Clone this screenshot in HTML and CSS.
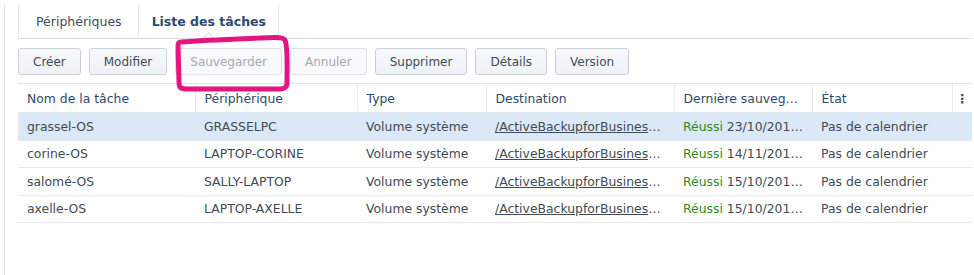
FILE: index.html
```html
<!DOCTYPE html>
<html lang="fr">
<head>
  <meta charset="UTF-8">
  <title>Active Backup for Business - Liste des tâches</title>
  <link rel="stylesheet" href="styles.css">
</head>
<body>
  <div class="panel">
    <nav class="tabs">
      <div class="tab">Périphériques</div>
      <div class="tab active">Liste des tâches</div>
    </nav>

    <div class="toolbar">
      <button class="btn">Créer</button>
      <button class="btn">Modifier</button>
      <button class="btn" disabled>Sauvegarder</button>
      <button class="btn" disabled>Annuler</button>
      <button class="btn">Supprimer</button>
      <button class="btn">Détails</button>
      <button class="btn">Version</button>
    </div>

    <table class="grid">
      <colgroup>
        <col style="width: 177px">
        <col style="width: 162px">
        <col style="width: 129px">
        <col style="width: 188px">
        <col style="width: 138px">
        <col style="width: 140px">
        <col>
      </colgroup>
      <thead>
        <tr>
          <th>Nom de la tâche</th>
          <th>Périphérique</th>
          <th>Type</th>
          <th>Destination</th>
          <th>Dernière sauvegarde</th>
          <th>État</th>
          <th class="menu">&#8942;</th>
        </tr>
      </thead>
      <tbody>
        <tr class="selected">
          <td>grassel-OS</td>
          <td>GRASSELPC</td>
          <td>Volume système</td>
          <td><a href="#">/ActiveBackupforBusiness/grassel-OS</a></td>
          <td><span class="ok">Réussi</span> 23/10/2019 02:10</td>
          <td>Pas de calendrier</td>
          <td></td>
        </tr>
        <tr>
          <td>corine-OS</td>
          <td>LAPTOP-CORINE</td>
          <td>Volume système</td>
          <td><a href="#">/ActiveBackupforBusiness/corine-OS</a></td>
          <td><span class="ok">Réussi</span> 14/11/2019 18:32</td>
          <td>Pas de calendrier</td>
          <td></td>
        </tr>
        <tr>
          <td>salomé-OS</td>
          <td>SALLY-LAPTOP</td>
          <td>Volume système</td>
          <td><a href="#">/ActiveBackupforBusiness/salome-OS</a></td>
          <td><span class="ok">Réussi</span> 15/10/2019 11:04</td>
          <td>Pas de calendrier</td>
          <td></td>
        </tr>
        <tr>
          <td>axelle-OS</td>
          <td>LAPTOP-AXELLE</td>
          <td>Volume système</td>
          <td><a href="#">/ActiveBackupforBusiness/axelle-OS</a></td>
          <td><span class="ok">Réussi</span> 15/10/2019 09:47</td>
          <td>Pas de calendrier</td>
          <td></td>
        </tr>
      </tbody>
    </table>
  </div>

  <!-- hand-drawn highlight around the disabled button -->
  <svg class="marker" width="120" height="60" viewBox="0 0 120 60">
    <path d="M6 8 C 30 6, 60 5, 85 4 C 100 3, 108 3, 110 6 C 113 12, 112 35, 112 50 C 111 55, 108 55, 100 55 L 12 55 C 6 55, 4 54, 4 48 L 3 12 C 3 9, 4 8, 6 8 Z"
          fill="none" stroke="#e4157f" stroke-width="5" stroke-linejoin="round"/>
  </svg>
</body>
</html>
```

FILE: styles.css
```css
body {
  margin: 0;
  font-family: "DejaVu Sans", Verdana, sans-serif;
  font-size: 12px;
  color: #414b55;
  background-color: #fff;
}
.panel {
  margin-left: 4px;
  margin-top: 5px;
  padding: 0 2px 0 13px;
  border-left: 1px solid #dfe3e7;
  height: 270px;
}
.tabs {
  display: flex;
  height: 33px;
  border-bottom: 1px solid #d9dee3;
}
.tab {
  position: relative;
  display: flex;
  align-items: center;
  padding: 0 16px 0 17px;
  border-left: 1px solid #e6e9ec;
  font-size: 12.5px;
  color: #414b55;
}
.tab:last-child {
  border-right: 1px solid #e6e9ec;
}
.tab.active {
  font-weight: bold;
  color: #2d4a6b;
  padding: 0 12px 0 13px;
}
.tab.active::after {
  content: "";
  position: absolute;
  left: 50%;
  bottom: -5px;
  width: 8px;
  height: 8px;
  margin-left: -4px;
  background-color: #fff;
  border-left: 1px solid #d9dee3;
  border-top: 1px solid #d9dee3;
  transform: rotate(45deg);
}
.toolbar {
  display: flex;
  gap: 8px;
  margin-top: 9px;
  margin-bottom: 8px;
}
.btn {
  height: 27px;
  padding: 0 14px;
  font-family: inherit;
  font-size: 12px;
  color: #414b55;
  background: linear-gradient(#f7f9fb, #eef2f6);
  border: 1px solid #c8d0d8;
  border-radius: 3px;
}
.btn:disabled {
  color: #a3abb3;
  background: #f7f9fa;
  border-color: #dce1e6;
}
.grid {
  width: 954px;
  border-collapse: collapse;
  table-layout: fixed;
  font-size: 12.4px;
}
.grid th,
.grid td {
  height: 26.5px;
  padding: 0 9px;
  text-align: left;
  white-space: nowrap;
  overflow: hidden;
  text-overflow: ellipsis;
  border-bottom: 1px solid #e6eaee;
}
.grid th {
  height: 28px;
  font-weight: normal;
  color: #2d4a6b;
  border-top: 1px solid #e1e5e9;
  border-left: 1px solid #e6eaee;
}
.grid th:first-child {
  border-left: none;
}
.grid th.menu {
  padding: 0;
  text-align: center;
  font-weight: bold;
  overflow: visible;
}
.grid tr.selected td {
  background-color: #dbe8f7;
}
.grid a {
  color: #414b55;
}
.ok {
  color: #2f8a22;
}
.marker {
  position: absolute;
  left: 175px;
  top: 34px;
}
```
